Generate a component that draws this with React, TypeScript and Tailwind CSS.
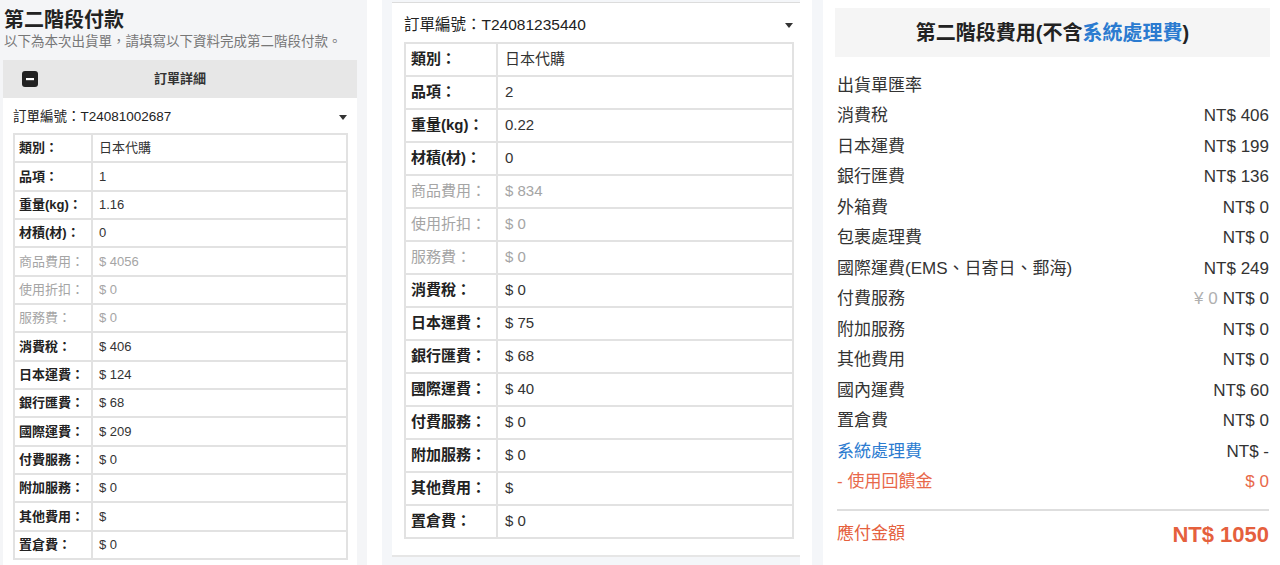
import React from "react";

type Row = { label: string; value: string; muted?: boolean };

const firstOrder: Row[] = [
  { label: "類別：", value: "日本代購" },
  { label: "品項：", value: "1" },
  { label: "重量(kg)：", value: "1.16" },
  { label: "材積(材)：", value: "0" },
  { label: "商品費用：", value: "$ 4056", muted: true },
  { label: "使用折扣：", value: "$ 0", muted: true },
  { label: "服務費：", value: "$ 0", muted: true },
  { label: "消費稅：", value: "$ 406" },
  { label: "日本運費：", value: "$ 124" },
  { label: "銀行匯費：", value: "$ 68" },
  { label: "國際運費：", value: "$ 209" },
  { label: "付費服務：", value: "$ 0" },
  { label: "附加服務：", value: "$ 0" },
  { label: "其他費用：", value: "$" },
  { label: "置倉費：", value: "$ 0" },
];

const secondOrder: Row[] = [
  { label: "類別：", value: "日本代購" },
  { label: "品項：", value: "2" },
  { label: "重量(kg)：", value: "0.22" },
  { label: "材積(材)：", value: "0" },
  { label: "商品費用：", value: "$ 834", muted: true },
  { label: "使用折扣：", value: "$ 0", muted: true },
  { label: "服務費：", value: "$ 0", muted: true },
  { label: "消費稅：", value: "$ 0" },
  { label: "日本運費：", value: "$ 75" },
  { label: "銀行匯費：", value: "$ 68" },
  { label: "國際運費：", value: "$ 40" },
  { label: "付費服務：", value: "$ 0" },
  { label: "附加服務：", value: "$ 0" },
  { label: "其他費用：", value: "$" },
  { label: "置倉費：", value: "$ 0" },
];

const fees = [
  { label: "出貨單匯率", value: "" },
  { label: "消費稅", value: "NT$ 406" },
  { label: "日本運費", value: "NT$ 199" },
  { label: "銀行匯費", value: "NT$ 136" },
  { label: "外箱費", value: "NT$ 0" },
  { label: "包裹處理費", value: "NT$ 0" },
  { label: "國際運費(EMS、日寄日、郵海)", value: "NT$ 249" },
  { label: "付費服務", value: "NT$ 0", yen: "¥ 0" },
  { label: "附加服務", value: "NT$ 0" },
  { label: "其他費用", value: "NT$ 0" },
  { label: "國內運費", value: "NT$ 60" },
  { label: "置倉費", value: "NT$ 0" },
];

function Caret() {
  return (
    <svg width="8" height="5" viewBox="0 0 8 5" className="shrink-0">
      <path d="M0 0h8L4 5z" fill="#333" />
    </svg>
  );
}

function SmallTable({ rows }: { rows: Row[] }) {
  return (
    <div className="border-x-2 border-t-2 border-[#e2e2e2] text-[13px]">
      {rows.map((r) => (
        <div key={r.label} className="flex h-[28.33px] border-b-2 border-[#e2e2e2]">
          <div
            className={
              r.muted
                ? "flex w-[78px] shrink-0 items-center border-r-2 border-[#e2e2e2] pl-[4px] text-[#a5a5a5]"
                : "flex w-[78px] shrink-0 items-center border-r-2 border-[#e2e2e2] pl-[4px] font-bold text-[#222]"
            }
          >
            {r.label}
          </div>
          <div className={r.muted ? "flex items-center pl-[6px] text-[#a5a5a5]" : "flex items-center pl-[6px] text-[#333]"}>
            {r.value}
          </div>
        </div>
      ))}
    </div>
  );
}

function LargeTable({ rows }: { rows: Row[] }) {
  return (
    <div className="border-x-2 border-t-2 border-[#e2e2e2] text-[15px]">
      {rows.map((r) => (
        <div key={r.label} className="flex h-[33px] border-b-2 border-[#e2e2e2]">
          <div
            className={
              r.muted
                ? "flex w-[92px] shrink-0 items-center border-r-2 border-[#e2e2e2] pl-[5px] text-[#a5a5a5]"
                : "flex w-[92px] shrink-0 items-center border-r-2 border-[#e2e2e2] pl-[5px] font-bold text-[#222]"
            }
          >
            {r.label}
          </div>
          <div className={r.muted ? "flex items-center pl-[7px] text-[#a5a5a5]" : "flex items-center pl-[7px] text-[#333]"}>
            {r.value}
          </div>
        </div>
      ))}
    </div>
  );
}

export default function App() {
  return (
    <div className="flex h-[565px] w-[1280px] overflow-hidden bg-white font-['Liberation_Sans','Noto_Sans_CJK_TC',sans-serif] text-[#333]">
      {/* 左：第二階段付款 */}
      <div className="w-[367px] shrink-0 bg-[#f4f5f7] pl-[3px] pr-[10px]">
        <h2 className="pl-[1px] pt-[7px] text-[20px] font-bold leading-[26px] text-[#222]">第二階段付款</h2>
        <p className="pl-[1px] text-[13.5px] leading-[18px] text-[#777]">
          以下為本次出貨單，請填寫以下資料完成第二階段付款。
        </p>
        <div className="mt-[9px] grid h-[38px] grid-cols-[40px_1fr_40px] items-center bg-[#e7e7e7]">
          <div className="pl-[19px]">
            <svg width="16" height="16" viewBox="0 0 16 16">
              <rect width="16" height="16" rx="3" fill="#222" />
              <rect x="4" y="7" width="8" height="2.2" fill="#fff" />
            </svg>
          </div>
          <div className="text-center text-[13px] font-bold text-[#333]">訂單詳細</div>
          <div />
        </div>
        <div className="bg-white pl-[10px] pr-[9px] pt-[3px] pb-[10px]">
          <div className="flex h-[32px] items-center justify-between pr-[1px] text-[13.5px] text-[#222]">
            <span>訂單編號：T24081002687</span>
            <Caret />
          </div>
          <SmallTable rows={firstOrder} />
        </div>
      </div>

      {/* 中：訂單 */}
      <div className="ml-[15px] w-[418px] shrink-0 bg-[#f4f6f9] pl-[10px]">
        <div className="mt-[2px] border-t border-b-2 border-t-[#dcdcdc] border-b-[#e6e6e6] bg-white pl-[12px] pr-[6px] pt-[5px] pb-[16px]">
          <div className="flex h-[34px] items-center justify-between pr-[1px] text-[15.5px] text-[#222]">
            <span>訂單編號：T24081235440</span>
            <Caret />
          </div>
          <LargeTable rows={secondOrder} />
        </div>
      </div>

      {/* 右：第二階段費用 */}
      <div className="ml-[12px] flex-1 bg-[#f4f6f9] pl-[11px]">
        <div className="h-full bg-white pl-[12px] pr-[10px] pt-[8px]">
          <div className="flex h-[49px] items-center justify-center bg-[#f5f5f5] text-[20px] font-bold text-[#222]">
            第二階段費用(不含<span className="text-[#2b7bd0]">系統處理費</span>)
          </div>
          <div className="mt-[13px] pl-[2px] pr-[1px] text-[17px]">
            {fees.map((f) => (
              <div key={f.label} className="flex h-[30.5px] items-center justify-between">
                <span>{f.label}</span>
                <span>
                  {f.yen && <span className="mr-[5px] text-[#b0b0b0]">{f.yen}</span>}
                  {f.value}
                </span>
              </div>
            ))}
            <div className="flex h-[30.5px] items-center justify-between">
              <span className="text-[#2b7bd0]">系統處理費</span>
              <span>NT$ -</span>
            </div>
            <div className="flex h-[30.5px] items-center justify-between text-[#e8684a]">
              <span>- 使用回饋金</span>
              <span>$ 0</span>
            </div>
            <div className="mt-[12px] border-t-2 border-[#dedede]" />
            <div className="mt-[8px] flex h-[30px] items-center justify-between text-[#e5603d]">
              <span className="text-[17px]">應付金額</span>
              <span className="text-[22px] font-bold">NT$ 1050</span>
            </div>
          </div>
        </div>
      </div>
    </div>
  );
}
